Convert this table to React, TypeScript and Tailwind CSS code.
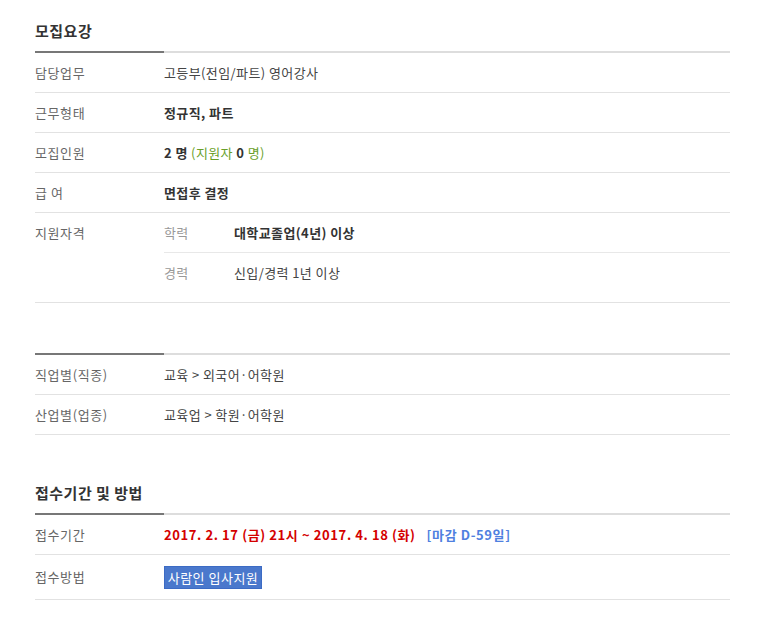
const font = { fontFamily: '"Noto Sans CJK KR", "Noto Sans", sans-serif' }

function Heading({ title }: { title?: string }) {
  return (
    <div>
      {title && <h2 className="text-[15px] font-bold leading-[22px] tracking-[0.5px] text-[#333] pb-[9px]">{title}</h2>}
      <div className="flex h-[2px]">
        <div className="w-[129px] bg-[#777]" />
        <div className="flex-1 bg-[#ddd]" />
      </div>
    </div>
  )
}

function Row({ label, children, h = 'h-[40px]' }: { label: string; children: React.ReactNode; h?: string }) {
  return (
    <div className={`flex items-center border-b border-[#e2e2e2] ${h}`}>
      <div className="w-[129px] shrink-0 text-[#666] tracking-[0.6px]">{label}</div>
      <div className="flex-1 text-[#444]">{children}</div>
    </div>
  )
}

export default function App() {
  return (
    <div className="bg-white min-h-[628px] px-[35px] pt-[20px] w-[765px] text-[13px] tracking-[0.4px]" style={font}>
      <section>
        <Heading title="모집요강" />
        <Row label="담당업무">고등부(전임/파트) 영어강사</Row>
        <Row label="근무형태"><b className="text-[#333]">정규직, 파트</b></Row>
        <Row label="모집인원">
          <b className="text-[#333]">2 명</b>{' '}
          <span className="text-[#6a9f2a]">(지원자 <b className="text-[#333]">0</b> 명)</span>
        </Row>
        <Row label="급 여"><b className="text-[#333]">면접후 결정</b></Row>
        <div className="flex border-b border-[#e2e2e2]">
          <div className="w-[129px] shrink-0 text-[#666] tracking-[0.6px] h-[40px] flex items-center">지원자격</div>
          <div className="flex-1">
            <div className="flex items-center h-[40px] border-b border-[#e8e8e8]">
              <div className="w-[70px] text-[#999]">학력</div>
              <b className="text-[#333]">대학교졸업(4년) 이상</b>
            </div>
            <div className="flex items-start h-[49px] pt-[10px]">
              <div className="w-[70px] text-[#999]">경력</div>
              <span className="text-[#444]">신입/경력 1년 이상</span>
            </div>
          </div>
        </div>
      </section>

      <section className="mt-[50px]">
        <Heading />
        <Row label="직업별(직종)">교육 &gt; 외국어·어학원</Row>
        <Row label="산업별(업종)">교육업 &gt; 학원·어학원</Row>
      </section>

      <section className="mt-[47px]">
        <Heading title="접수기간 및 방법" />
        <Row label="접수기간">
          <b className="text-[#d40000] tracking-[0.6px]">2017. 2. 17 (금) 21시 ~ 2017. 4. 18 (화)</b>
          <b className="text-[#4f80e0] tracking-[0.6px] ml-[11px]">[마감 D-59일]</b>
        </Row>
        <Row label="접수방법" h="h-[45px]">
          <button className="h-[23px] w-[98px] bg-[#4a78cc] border border-[#3c6bc4] text-white text-[13px] leading-[21px] tracking-[0.5px]">
            사람인 입사지원
          </button>
        </Row>
      </section>
    </div>
  )
}
